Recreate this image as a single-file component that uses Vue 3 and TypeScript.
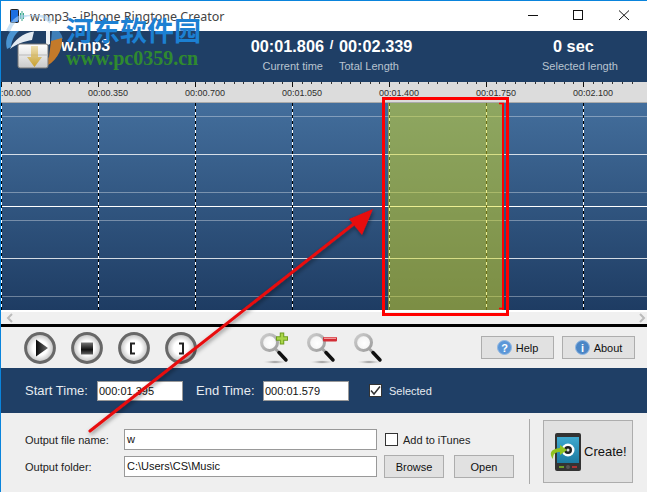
<script setup lang="ts">
const majors = [
  { x: 0, label: '00:00.000' },
  { x: 97, label: '00:00.350' },
  { x: 194, label: '00:00.700' },
  { x: 291, label: '00:01.050' },
  { x: 388, label: '00:01.400' },
  { x: 485, label: '00:01.750' },
  { x: 582, label: '00:02.100' },
]
const ticks: number[] = []
for (let i = 0; i < 66; i++) ticks.push(Math.round(i * 9.7))
const lines = [
  { y: 13, c: 'rgba(255,255,255,.35)' },
  { y: 51, c: 'rgba(255,255,255,.8)' },
  { y: 89, c: 'rgba(255,255,255,.35)' },
  { y: 103, c: '#fff' },
  { y: 117, c: 'rgba(255,255,255,.35)' },
  { y: 155, c: 'rgba(255,255,255,.8)' },
  { y: 193, c: 'rgba(255,255,255,.35)' },
]
</script>

<template>
  <div class="window">
    <div class="titlebar">
      <svg class="appicon" width="16" height="14" viewBox="0 0 16 14">
        <rect x="0.500" y="0.500" width="8" height="13" rx="1" fill="#1c6fe0" stroke="#222" />
        <path d="M12 2v10M10.500 4v6M13.500 4v6" stroke="#3aa88c" fill="none" />
      </svg>
      <span class="title">w.mp3 - iPhone Ringtone Creator</span>
      <div class="controls">
        <svg width="119" height="12" viewBox="0 0 119 12">
          <path d="M0 6.500H10" stroke="#111" />
          <rect x="45.500" y="1.500" width="9" height="9" fill="none" stroke="#111" />
          <path d="M91 1.500L101 11M101 1.500L91 11" stroke="#111" fill="none" />
        </svg>
      </div>
    </div>

    <div class="header">
      <div class="h-name">w.mp3</div>
      <div class="h-block h-cur"><b>00:01.806</b><span>Current time</span></div>
      <div class="h-slash">/</div>
      <div class="h-block h-total"><b>00:02.339</b><span>Total Length</span></div>
      <div class="h-block h-sel"><b>0 sec</b><span>Selected length</span></div>
    </div>

    <div class="ruler">
      <svg class="ruler-ticks" width="646" height="6" viewBox="0 0 646 6">
        <rect v-for="t in ticks" :key="t" :x="t" y="0" width="1" height="2" fill="#333" />
        <rect v-for="m in majors" :key="m.x" :x="m.x" y="0" width="1" height="5" fill="#111" />
      </svg>
      <div class="ruler-labels">
        <div v-for="m in majors" :key="m.x" class="ruler-cell"><span>{{ m.label }}</span></div>
      </div>
    </div>

    <div class="wave">
      <div v-for="(l, i) in lines" :key="i" class="hline" :style="{ top: l.y + 'px', background: l.c }"></div>
      <div class="vcols">
        <div v-for="m in majors" :key="m.x" class="vcol"></div>
      </div>
      <div class="selection"></div>
      <div class="sel-edge"></div>
    </div>

    <div class="scroll">
      <svg width="8" height="10" viewBox="0 0 8 10"><path d="M6 1L2 5L6 9" fill="none" stroke="#bbb" stroke-width="2" /></svg>
      <svg width="8" height="10" viewBox="0 0 8 10"><path d="M2 1L6 5L2 9" fill="none" stroke="#bbb" stroke-width="2" /></svg>
    </div>
    <div class="blackline"></div>

    <div class="toolbar">
      <svg class="round" width="32" height="32" viewBox="0 0 32 32">
        <defs>
          <radialGradient id="rb" cx="50%" cy="50%" r="50%">
            <stop offset="0.5" stop-color="#fff" />
            <stop offset="1" stop-color="#bdbdbd" />
          </radialGradient>
          <linearGradient id="pl" x1="0" y1="0" x2="1" y2="0">
            <stop offset="0" stop-color="#0a0a0a" />
            <stop offset="1" stop-color="#6c6c6c" />
          </linearGradient>
          <linearGradient id="st" x1="0" y1="0" x2="0" y2="1">
            <stop offset="0" stop-color="#777" />
            <stop offset="0.6" stop-color="#111" />
            <stop offset="1" stop-color="#666" />
          </linearGradient>
        </defs>
        <circle cx="16" cy="16" r="14.400" fill="url(#rb)" stroke="#686868" stroke-width="3" />
        <path d="M12 7.500L24 16L12 24.500Z" fill="url(#pl)" />
      </svg>
      <svg class="round" width="32" height="32" viewBox="0 0 32 32">
        <circle cx="16" cy="16" r="14.400" fill="url(#rb)" stroke="#686868" stroke-width="3" />
        <rect x="10" y="10.500" width="12" height="12" fill="url(#st)" />
      </svg>
      <svg class="round" width="32" height="32" viewBox="0 0 32 32">
        <circle cx="16" cy="16" r="14.400" fill="url(#rb)" stroke="#686868" stroke-width="3" />
        <path d="M17 11.500H13V21.500H17" fill="none" stroke="#222" stroke-width="2" />
      </svg>
      <svg class="round" width="32" height="32" viewBox="0 0 32 32">
        <circle cx="16" cy="16" r="14.400" fill="url(#rb)" stroke="#686868" stroke-width="3" />
        <path d="M14 11.500H18V21.500H14" fill="none" stroke="#222" stroke-width="2" />
      </svg>

      <svg class="mag mag-first" width="30" height="33" viewBox="0 0 30 33">
        <defs>
          <radialGradient id="gl" cx="55%" cy="55%" r="55%">
            <stop offset="0" stop-color="#fff" />
            <stop offset="0.7" stop-color="#f6f6f6" />
            <stop offset="1" stop-color="#cfcfcf" />
          </radialGradient>
          <linearGradient id="ring" x1="0" y1="0" x2="1" y2="1">
            <stop offset="0" stop-color="#cdcdcd" />
            <stop offset="1" stop-color="#9c9c9c" />
          </linearGradient>
          <radialGradient id="sh" cx="50%" cy="50%" r="50%">
            <stop offset="0" stop-color="#777" />
            <stop offset="1" stop-color="#eee" stop-opacity="0" />
          </radialGradient>
        </defs>
        <ellipse cx="15" cy="31" rx="13" ry="2" fill="url(#sh)" />
        <circle cx="9.500" cy="11.500" r="8" fill="url(#gl)" stroke="url(#ring)" stroke-width="3" />
        <path d="M15.500 18L19 21.500" stroke="#a5a5a5" stroke-width="3" />
        <path d="M19 21.500L26 29" stroke="#111" stroke-width="3.500" stroke-linecap="round" />
        <path d="M22 1.500V13.500M16 7.500H28" stroke="#6d9c1e" stroke-width="4.500" />
        <path d="M22 2.500V12.500M17 7.500H27" stroke="#a9d548" stroke-width="2.500" />
      </svg>
      <svg class="mag" width="30" height="33" viewBox="0 0 30 33">
        <ellipse cx="15" cy="31" rx="13" ry="2" fill="url(#sh)" />
        <circle cx="9.500" cy="11.500" r="8" fill="url(#gl)" stroke="url(#ring)" stroke-width="3" />
        <path d="M15.500 18L19 21.500" stroke="#a5a5a5" stroke-width="3" />
        <path d="M19 21.500L26 29" stroke="#111" stroke-width="3.500" stroke-linecap="round" />
        <rect x="16" y="6" width="14" height="4.500" rx="1" fill="#d22c35" />
        <rect x="17" y="6.600" width="12" height="1.300" fill="#f3a3a3" />
      </svg>
      <svg class="mag" width="30" height="33" viewBox="0 0 30 33">
        <ellipse cx="15" cy="31" rx="13" ry="2" fill="url(#sh)" />
        <circle cx="9.500" cy="11.500" r="8" fill="url(#gl)" stroke="url(#ring)" stroke-width="3" />
        <path d="M15.500 18L19 21.500" stroke="#a5a5a5" stroke-width="3" />
        <path d="M19 21.500L26 29" stroke="#111" stroke-width="3.500" stroke-linecap="round" />
      </svg>

      <div class="tb-right">
        <div class="btn tb-btn">
          <svg width="15" height="15" viewBox="0 0 15 15">
            <circle cx="7.500" cy="7.500" r="7" fill="#5b97d8" stroke="#8fb6e2" />
            <text x="7.500" y="11.500" class="ico-t">?</text>
          </svg>
          Help
        </div>
        <div class="btn tb-btn">
          <svg width="15" height="15" viewBox="0 0 15 15">
            <circle cx="7.500" cy="7.500" r="7" fill="#4b86c6" stroke="#8fb6e2" />
            <text x="7.500" y="11.500" class="ico-t">i</text>
          </svg>
          About
        </div>
      </div>
    </div>

    <div class="band">
      <span class="b-l1">Start Time:</span>
      <div class="field b-f">000:01.395</div>
      <span class="b-l2">End Time:</span>
      <div class="field b-f">000:01.579</div>
      <div class="check checked">
        <svg width="11" height="11" viewBox="0 0 11 11"><path d="M1 5.500L4 9L10 1.500" fill="none" stroke="#333" stroke-width="1.500" /></svg>
      </div>
      <span class="b-l3">Selected</span>
    </div>

    <div class="bottom">
      <div class="form">
        <span class="f-label">Output file name:</span>
        <div class="field">w</div>
        <div class="itunes">
          <div class="check"></div>
          <span>Add to iTunes</span>
        </div>
        <span class="f-label">Output folder:</span>
        <div class="field">C:\Users\CS\Music</div>
        <div class="f-btns">
          <div class="btn f-btn">Browse</div>
          <div class="btn f-btn">Open</div>
        </div>
      </div>
      <div class="sep"></div>
      <div class="btn create">
        <svg width="33" height="38" viewBox="0 0 33 38">
          <defs>
            <linearGradient id="scr" x1="0" y1="0" x2="0" y2="1">
              <stop offset="0" stop-color="#3fa9cf" />
              <stop offset="1" stop-color="#1c7aa0" />
            </linearGradient>
          </defs>
          <rect x="6" y="0" width="26" height="38" rx="2" fill="#333" />
          <rect x="8" y="4" width="22" height="26" fill="url(#scr)" />
          <circle cx="19" cy="17" r="6.500" fill="#fff" />
          <circle cx="19" cy="17" r="4" fill="#222" />
          <circle cx="19" cy="17" r="1.500" fill="#ddd" />
          <rect x="10" y="33" width="5" height="2" fill="#6a9a2a" />
          <circle cx="19" cy="34" r="2" fill="#555" />
          <rect x="23" y="33" width="5" height="2" fill="#a33" />
          <path d="M4 26C0 21 1 16 11 15V12L18 17L11 22V19C6 19 4 21 4 26Z" fill="#8fc31f" />
        </svg>
        <span>Create!</span>
      </div>
    </div>

    <svg class="annot" width="647" height="492" viewBox="0 0 647 492">
      <defs>
        <filter id="ds" x="-10%" y="-10%" width="120%" height="120%">
          <feDropShadow dx="1" dy="2" stdDeviation="2" flood-color="#000" flood-opacity=".45" />
        </filter>
      </defs>
      <rect x="383.500" y="98.500" width="124" height="216" fill="none" stroke="#ff0000" stroke-width="3" />
      <path d="M499 103.500H504M499 308.500H504" stroke="#f00" stroke-width="1.500" />
      <g filter="url(#ds)">
        <path d="M90 431L360 219" stroke="#e8090f" stroke-width="3" stroke-linecap="round" />
        <path d="M373 209L349 219L362 235Z" fill="#e8090f" />
      </g>
    </svg>

    <div class="wm">
      <svg class="wm-logo" width="58" height="56" viewBox="0 0 58 56">
        <defs>
          <linearGradient id="fold" x1="0" y1="0" x2="0" y2="1">
            <stop offset="0" stop-color="#fff" />
            <stop offset="1" stop-color="#c9c9c9" />
          </linearGradient>
          <linearGradient id="arw" x1="0" y1="0" x2="0" y2="1">
            <stop offset="0" stop-color="#e3c56a" stop-opacity=".5" />
            <stop offset="1" stop-color="#c9a02c" />
          </linearGradient>
        </defs>
        <path d="M3 16A26 26 0 0 1 46 7" fill="none" stroke="#a9cfee" stroke-width="4" opacity=".6" />
        <path d="M2 34C0 26 2 21 5.500 16H14C9 20 7 25 6 32Z" fill="#4a94d2" />
        <path d="M5 34C9 25 18 18 29 16.500L27 25C20 26 11 29 5 34Z" fill="#e4ebf2" />
        <path d="M41 16H45V29L41 31Z" fill="#eef2f6" />
        <path d="M47 16H54C57 20 57.500 22 57.500 24L46 27Z" fill="#3f7fb8" />
        <path d="M57 23C58 36 50 48 38 53L36 50L44 42L46 26Z" fill="#c47a2a" />
        <rect x="13" y="29" width="30" height="24" rx="2" fill="url(#fold)" stroke="#777" />
        <path d="M13 40H43" stroke="#bbb" />
        <path d="M26 31H33V42H37L29.500 52L22 42H26Z" fill="url(#arw)" />
      </svg>
      <div class="wm-text">
        <div class="wm-cn">河东软件园</div>
        <div class="wm-url">www.pc0359.cn</div>
      </div>
    </div>
  </div>
</template>

<style>
html, body { margin: 0; padding: 0; background: #fff; }
</style>

<style scoped>
.window {
  position: relative;
  width: 647px;
  height: 492px;
  box-sizing: border-box;
  border-top: 1px solid #0a84dc;
  border-left: 1px solid #0a84dc;
  overflow: hidden;
  font-family: "Liberation Sans", sans-serif;
  font-size: 11px;
  display: flex;
  flex-direction: column;
  background: #efefef;
}
.titlebar {
  height: 30px;
  background: #fff;
  display: flex;
  align-items: center;
  padding-left: 9px;
  flex: none;
}
.appicon { margin-right: 4px; }
.title { font: 12.500px "Noto Sans", sans-serif; color: #444; }
.controls { margin-left: auto; display: flex; margin-top: -2px; }
.header {
  height: 51px;
  flex: none;
  background: #1f3f66;
  color: #fff;
  display: flex;
  box-sizing: border-box;
  padding-top: 4px;
}
.h-name { width: 248px; padding-left: 60px; box-sizing: border-box; font: bold 16px/22px "Liberation Sans", sans-serif; }
.h-block { display: flex; flex-direction: column; }
.h-block b { font: bold 16.300px/22px "Liberation Sans", sans-serif; white-space: nowrap; }
.h-block span { font-size: 11px; line-height: 19px; color: #b9c4d0; white-space: nowrap; }
.h-cur { width: 75px; align-items: flex-end; }
.h-cur span { margin-right: 1px; }
.h-slash { width: 15px; text-align: center; font: bold 13px/20px "Liberation Sans", sans-serif; }
.h-total { width: 203px; }
.h-sel b { margin-left: 11px; }
.ruler { height: 21px; flex: none; background: #dcdcdc; border-bottom: 1px solid #aaa; box-sizing: border-box; overflow: hidden; }
.ruler-ticks { display: block; height: 6px; }
.ruler-labels { display: flex; height: 14px; }
.ruler-cell { width: 97px; flex: none; font-size: 9px; line-height: 11px; color: #2e2e2e; }
.ruler-cell span { display: block; margin-left: -10px; white-space: nowrap; }
.wave {
  height: 207px;
  flex: none;
  position: relative;
  background: linear-gradient(#436e9c, #1e3c63);
  overflow: hidden;
}
.hline { position: absolute; left: 0; right: 0; height: 1px; }
.vcols { display: flex; height: 100%; position: relative; }
.vcol {
  width: 97px;
  flex: none;
  background: repeating-linear-gradient(#000 0 3px, #fff 3px 6px) left top / 1px 100% no-repeat;
}
.selection {
  position: absolute;
  left: 387px;
  top: 0;
  bottom: 0;
  width: 114px;
  background: rgba(218, 223, 37, .5);
}
.sel-edge {
  position: absolute;
  left: 501px;
  top: 0;
  bottom: 0;
  width: 2px;
  background: #f00;
}
.scroll {
  height: 14px;
  flex: none;
  background: #f0f0f0;
  border-top: 2px solid #fff;
  box-sizing: border-box;
  display: flex;
  justify-content: space-between;
  align-items: center;
  padding: 0 1px 0 5px;
}
.blackline { height: 3px; flex: none; background: #000; }
.toolbar {
  height: 41px;
  flex: none;
  background: #efefef;
  display: flex;
  align-items: center;
  padding-left: 23px;
  padding-right: 12px;
  box-sizing: border-box;
  gap: 15px;
}
.round { flex: none; }
.mag { flex: none; margin-left: 2px; }
.mag-first { margin-left: 48px; }
.tb-right { margin-left: auto; display: flex; gap: 8px; }
.btn {
  background: #e1e1e1;
  border: 1px solid #adadad;
  box-sizing: border-box;
  display: flex;
  align-items: center;
  justify-content: center;
  color: #111;
}
.tb-btn { width: 73px; height: 23px; gap: 4px; }
.ico-t { font: bold 11px "Liberation Sans", sans-serif; fill: #fff; text-anchor: middle; }
.band {
  height: 45px;
  flex: none;
  background: #1f3f66;
  color: #e6ebf0;
  display: flex;
  align-items: center;
  padding-left: 24px;
  box-sizing: border-box;
}
.field {
  background: #fff;
  border: 1px solid #999;
  box-sizing: border-box;
  height: 20px;
  line-height: 18px;
  padding-left: 1px;
  color: #111;
  white-space: nowrap;
  overflow: hidden;
}
.b-l1 { width: 72px; font-size: 13px; }
.b-f { width: 86px; }
.b-l2 { margin-left: 13px; width: 67px; font-size: 13px; }
.check {
  width: 13px;
  height: 13px;
  box-sizing: border-box;
  border: 1px solid #333;
  background: #fff;
  display: flex;
  align-items: center;
  justify-content: center;
  flex: none;
}
.band .check { margin-left: 20px; }
.b-l3 { margin-left: 7px; }
.bottom {
  flex: 1;
  display: flex;
  background: #efefef;
  padding-top: 6px;
  align-items: flex-start;
  box-sizing: border-box;
  padding-left: 24px;
}
.form {
  display: grid;
  grid-template-columns: 99px 253px auto;
  grid-auto-rows: 21px;
  row-gap: 6px;
  align-items: center;
  margin-top: 10px;
}
.form .field { height: 21px; line-height: 19px; padding-left: 2px; }
.f-label { color: #222; }
.itunes { display: flex; align-items: center; gap: 5px; margin-left: 8px; color: #222; }
.f-btns { display: flex; gap: 10px; margin-left: 7px; }
.f-btn { width: 60px; height: 23px; }
.sep { width: 1px; height: 65px; background: #aaa; margin-left: 15px; }
.create {
  width: 90px;
  height: 63px;
  margin-left: 13px;
  margin-top: 1px;
  justify-content: flex-start;
  padding-left: 5px;
  gap: 2px;
  font-size: 13px;
}
.annot { position: absolute; left: -1px; top: -1px; pointer-events: none; }
.wm { position: absolute; left: 4px; top: 14px; display: flex; pointer-events: none; }
.wm-logo { flex: none; }
.wm-text { margin-left: 3px; }
.wm-cn {
  font: bold 27px/30px "Noto Sans CJK SC", sans-serif;
  color: #1c80d2;
  white-space: nowrap;
}
.wm-url {
  font: bold 20px/18px "Liberation Serif", serif;
  color: #2f8a2f;
  white-space: nowrap;
  margin-top: 4px;
}
</style>
